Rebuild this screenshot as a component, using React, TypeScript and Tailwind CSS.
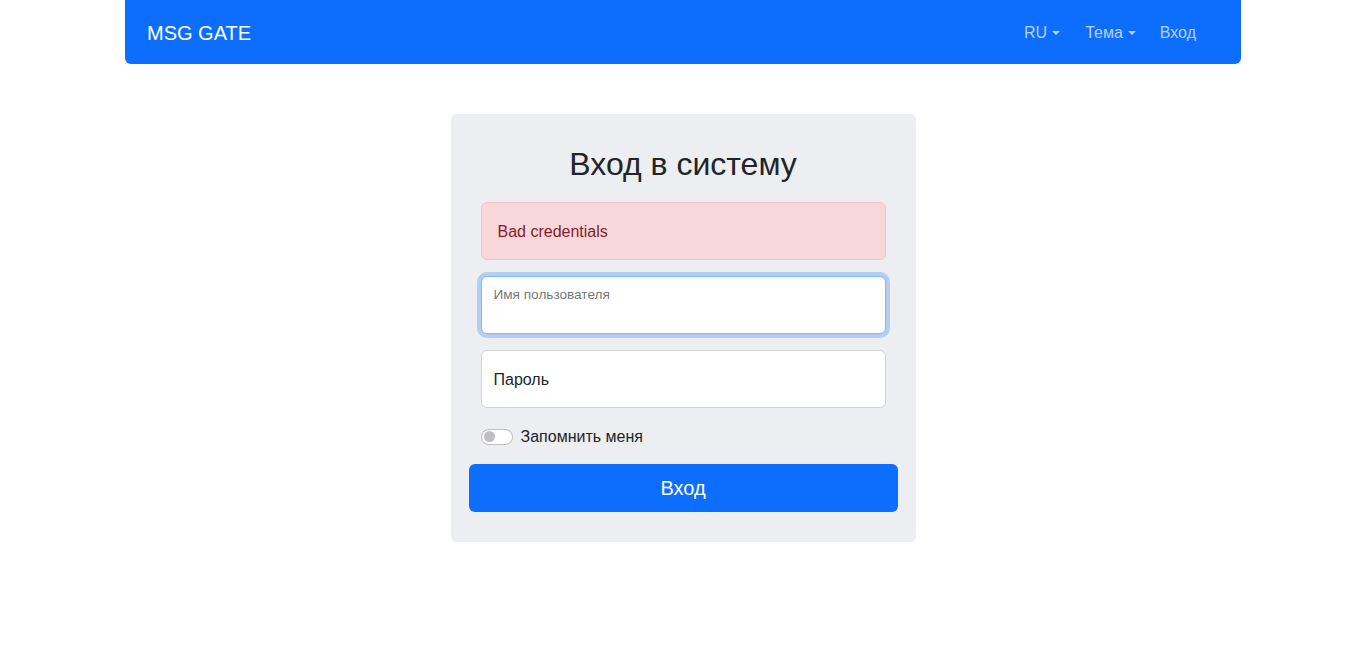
export default function App() {
  return (
    <div className="min-h-screen bg-white text-[#212529] font-['Liberation_Sans',Arial,sans-serif]">
      <header className="mx-auto w-[1116px] h-16 bg-[#0d6efd] rounded-b-md flex items-center justify-between pl-[22px] pr-[37px]">
        <a href="#" className="text-white text-xl leading-[30px] pt-[2px]">MSG GATE</a>
        <nav className="flex items-center text-base leading-6 text-white/70 pt-[2px]">
          <a href="#" className="flex items-center px-2 py-2">
            RU
            <span className="ml-[5px] w-0 h-0 border-x-[4.8px] border-x-transparent border-t-[4.8px] border-t-white/70"></span>
          </a>
          <a href="#" className="flex items-center px-2 py-2 ml-[9px]">
            Тема
            <span className="ml-[5px] w-0 h-0 border-x-[4.8px] border-x-transparent border-t-[4.8px] border-t-white/70"></span>
          </a>
          <a href="#" className="px-2 py-2 ml-[8px]">Вход</a>
        </nav>
      </header>

      <main className="flex justify-center pt-[50px]">
        <form className="w-[465px] bg-[#eceef1] rounded-md px-[30px] pt-[31px] pb-[30px] flex flex-col">
          <h1 className="text-[32px] leading-[38px] text-center">Вход в систему</h1>

          <div className="mt-[19px] h-[58px] flex items-center px-4 pt-[2px] bg-[#f8d7da] border border-[#f5c2c7] rounded-md text-[#842029] text-base">
            Bad credentials
          </div>

          <div className="mt-4 relative h-[58px] bg-white border border-[#86b7fe] rounded-md shadow-[0_0_0_4px_rgba(13,110,253,0.25)]">
            <label className="absolute left-[12px] top-[9px] text-[13.6px] leading-[17px] text-[#212529]/65">Имя пользователя</label>
          </div>

          <div className="mt-4 relative h-[58px] bg-white border border-[#ced4da] rounded-md flex items-center px-3 pt-[2px]">
            <label className="text-base text-[#212529]">Пароль</label>
          </div>

          <div className="mt-4 h-6 flex items-center">
            <span className="w-8 h-4 mt-[1px] rounded-full border border-black/25 bg-white flex items-center px-[2px]">
              <span className="w-[11px] h-[11px] rounded-full bg-black/25"></span>
            </span>
            <span className="ml-2 text-base pt-[2px]">Запомнить меня</span>
          </div>

          <button type="button" className="mt-4 -mx-3 h-12 bg-[#0d6efd] rounded-md text-white text-xl">
            Вход
          </button>
        </form>
      </main>
    </div>
  );
}
